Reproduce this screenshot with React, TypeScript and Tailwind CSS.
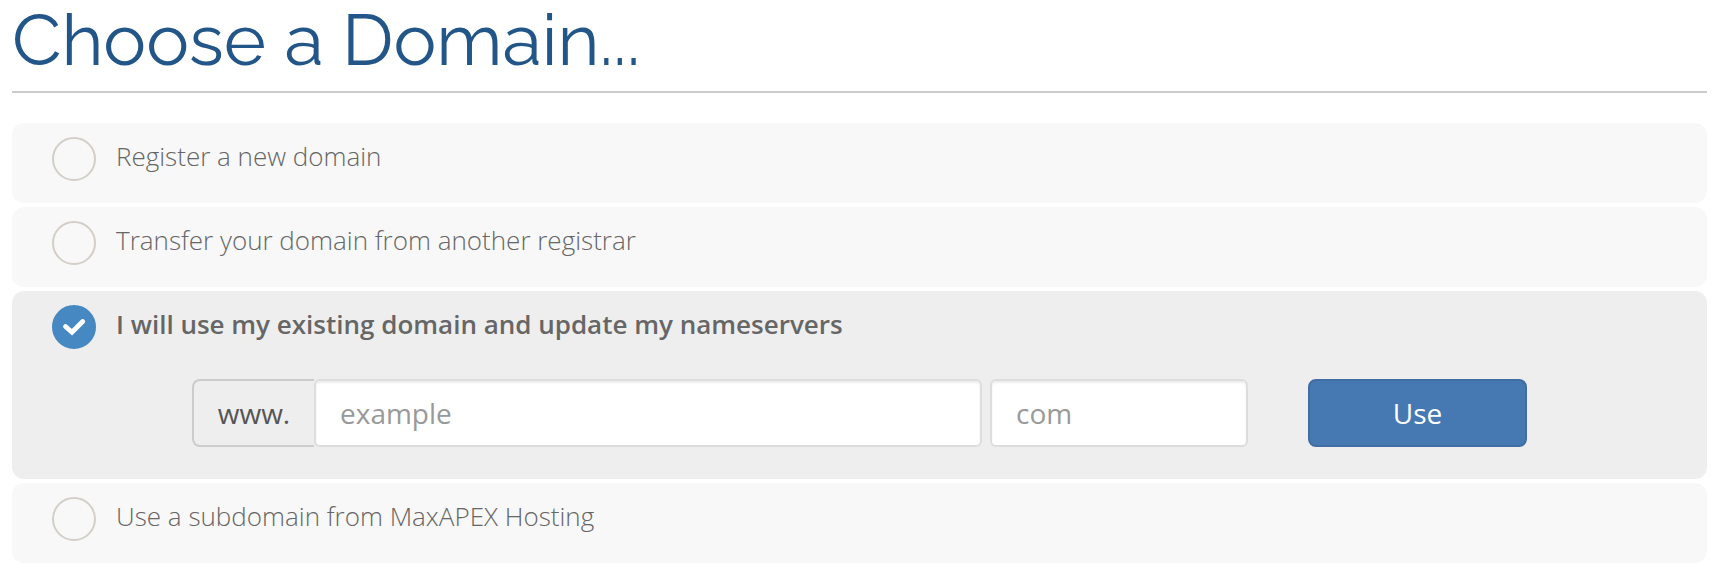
import React, { useState } from 'react';

type DomainOption = 'register' | 'transfer' | 'owndomain' | 'subdomain';

const OPTIONS: { id: DomainOption; label: string }[] = [
  { id: 'register', label: 'Register a new domain' },
  { id: 'transfer', label: 'Transfer your domain from another registrar' },
  { id: 'owndomain', label: 'I will use my existing domain and update my nameservers' },
  { id: 'subdomain', label: 'Use a subdomain from MaxAPEX Hosting' },
];

const inputStyle =
  'h-[68px] w-full min-w-0 rounded-md border-2 border-[#ddd] bg-white px-6 text-[28px] text-[#555] shadow-[inset_0_2px_2px_rgba(0,0,0,0.075)] outline-none placeholder:text-[#999]';

const OwnDomainForm: React.FC = () => {
  const [sld, setSld] = useState('');
  const [tld, setTld] = useState('');

  return (
    <form
      className="grid grid-cols-[790fr_258fr_271fr] gap-2 px-[180px] pt-2 pb-8"
      onSubmit={(e) => e.preventDefault()}
    >
      <div className="flex">
        <label
          htmlFor="sld"
          className="flex w-[122px] shrink-0 items-center justify-center rounded-l-lg border-2 border-r-0 border-[#ccc] bg-[#eee] text-[28px] text-[#555]"
        >
          www.
        </label>
        <input
          id="sld"
          type="text"
          placeholder="example"
          value={sld}
          onChange={(e) => setSld(e.target.value)}
          className={inputStyle}
        />
      </div>
      <input
        type="text"
        aria-label="Top-level domain"
        placeholder="com"
        value={tld}
        onChange={(e) => setTld(e.target.value)}
        className={inputStyle}
      />
      <div className="pl-[52px]">
        <button
          type="submit"
          className="h-[68px] w-full rounded-lg border-2 border-[#3f6da4] bg-[#4679b2] text-[28px] text-white"
        >
          Use
        </button>
      </div>
    </form>
  );
};

export default function App() {
  const [selected, setSelected] = useState<DomainOption>('owndomain');

  return (
    <main className="bg-white pr-[15px] pb-3 pl-3 font-['Open_Sans',sans-serif] text-[#666]">
      <h1 className="border-b-2 border-[#ccc] pb-[11px] font-['Raleway','Lato',sans-serif] text-[72px] leading-[80px] text-[#225588]">
        Choose a Domain...
      </h1>

      <div className="mt-[30px] flex flex-col gap-1">
        {OPTIONS.map(({ id, label }) => {
          const active = selected === id;
          return (
            <section key={id} className={`rounded-xl ${active ? 'bg-[#eee]' : 'bg-[#f8f8f8]'}`}>
              <div className="flex h-20 items-start pt-[14px] pl-10">
                {/* Radio with the tick drawn over it */}
                <span className="relative size-11 shrink-0">
                  <input
                    id={id}
                    type="radio"
                    name="domainoption"
                    checked={active}
                    onChange={() => setSelected(id)}
                    className="block size-11 appearance-none rounded-full border-2 border-[#d3cfc8] checked:border-[#4588c2] checked:bg-[#4588c2]"
                  />
                  {active && (
                    <svg
                      viewBox="0 0 44 44"
                      className="pointer-events-none absolute inset-0 size-11"
                      fill="none"
                      stroke="#fff"
                      strokeWidth="4.8"
                    >
                      <path d="M13.5 21.5 L20 27.3 L30.7 16.5" strokeLinecap="round" />
                    </svg>
                  )}
                </span>
                <label
                  htmlFor={id}
                  className={`pl-5 text-[26px] leading-[38px] ${active ? 'font-semibold' : 'font-light'}`}
                >
                  {label}
                </label>
              </div>
              {id === 'owndomain' && active && <OwnDomainForm />}
            </section>
          );
        })}
      </div>
    </main>
  );
}
